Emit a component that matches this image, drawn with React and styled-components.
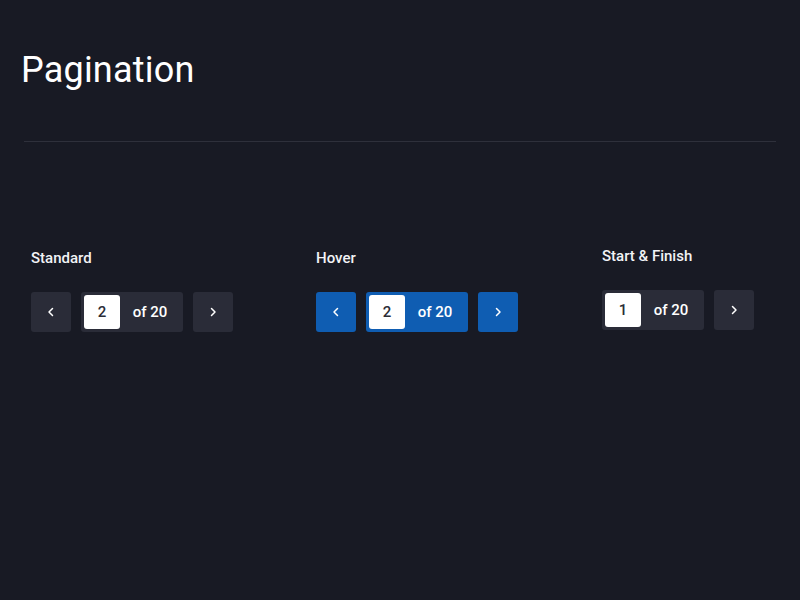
import React from "react";
import styled, { createGlobalStyle } from "styled-components";

const GlobalStyle = createGlobalStyle`
  html, body {
    margin: 0;
    padding: 0;
    background: #181a24;
    font-family: Roboto, "Liberation Sans", sans-serif;
    color: #ffffff;
  }
`;

const Page = styled.main`
  width: 800px;
  height: 600px;
  box-sizing: border-box;
  padding: 0 24px;
  background: #181a24;
  overflow: hidden;
`;

const Title = styled.h1`
  margin: 0;
  padding: 48px 0 0 0;
  margin-left: -3px;
  font-size: 36px;
  font-weight: 400;
  line-height: 44px;
  letter-spacing: 0.2px;
  color: #ffffff;
`;

const Divider = styled.hr`
  margin: 49px 0 0 0;
  border: none;
  height: 1px;
  background: #2e303b;
`;

const Showcase = styled.section`
  display: grid;
  grid-template-columns: 285px 286px auto;
  padding: 106px 0 0 7px;
`;

const Column = styled.div`
  display: flex;
  flex-direction: column;
  gap: 24px;
  margin-top: ${(p) => (p.$lift ? `-${p.$lift}px` : "0")};
`;

const Label = styled.h3`
  margin: 0;
  font-size: 15px;
  font-weight: 500;
  line-height: 20px;
  color: #f2f3f6;
`;

const Row = styled.div`
  display: flex;
  align-items: center;
  gap: 10px;
`;

const NavButton = styled.button`
  width: 40px;
  height: 40px;
  padding: 0;
  border: none;
  border-radius: 3px;
  display: flex;
  align-items: center;
  justify-content: center;
  background: ${(p) => (p.$active ? "#0f5db2" : "#2a2c38")};
  color: #ffffff;
  cursor: pointer;
`;

const PageBox = styled.div`
  width: 102px;
  height: 40px;
  box-sizing: border-box;
  padding: 3px;
  border-radius: 3px;
  display: flex;
  align-items: center;
  background: ${(p) => (p.$active ? "#0f5db2" : "#2a2c38")};
`;

const PageInput = styled.div`
  width: 36px;
  height: 34px;
  border-radius: 3px;
  background: #ffffff;
  color: #2b2d36;
  display: flex;
  align-items: center;
  justify-content: center;
  font-size: 15px;
  font-weight: 500;
`;

const Total = styled.span`
  flex: 1;
  text-align: center;
  font-size: 15px;
  font-weight: 500;
  color: #ffffff;
`;

const Chevron = ({ dir }) => (
  <svg width="8" height="10" viewBox="0 0 8 10" fill="none">
    <path
      d={dir === "left" ? "M5.5 1.5 2 5l3.5 3.5" : "M2.5 1.5 6 5 2.5 8.5"}
      stroke="#ffffff"
      strokeWidth="1.5"
      strokeLinecap="round"
      strokeLinejoin="round"
    />
  </svg>
);

function Pager({ page, total, active, showPrev = true }) {
  return (
    <Row>
      {showPrev && (
        <NavButton $active={active} aria-label="Previous page">
          <Chevron dir="left" />
        </NavButton>
      )}
      <PageBox $active={active}>
        <PageInput>{page}</PageInput>
        <Total>of {total}</Total>
      </PageBox>
      <NavButton $active={active} aria-label="Next page">
        <Chevron dir="right" />
      </NavButton>
    </Row>
  );
}

export default function App() {
  return (
    <>
      <GlobalStyle />
      <Page>
        <Title>Pagination</Title>
        <Divider />
        <Showcase>
          <Column>
            <Label>Standard</Label>
            <Pager page={2} total={20} />
          </Column>
          <Column>
            <Label>Hover</Label>
            <Pager page={2} total={20} active />
          </Column>
          <Column $lift={2}>
            <Label>Start &amp; Finish</Label>
            <Pager page={1} total={20} showPrev={false} />
          </Column>
        </Showcase>
      </Page>
    </>
  );
}
